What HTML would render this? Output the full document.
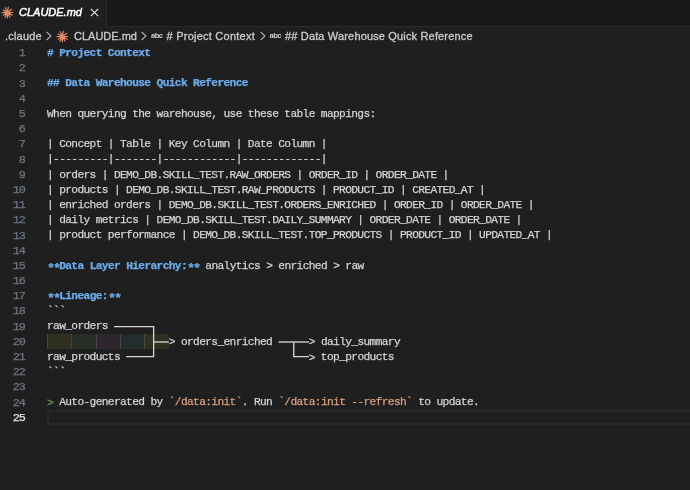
<!DOCTYPE html>
<html><head><meta charset="utf-8">
<style>
html,body{margin:0;padding:0;width:690px;height:490px;overflow:hidden;background:#1f1f1f;}
body{position:relative;font-family:"Liberation Sans",sans-serif;}
#tabs{position:absolute;left:0;top:0;width:690px;height:27px;background:#181818;}
#tabs .fill{position:absolute;left:106px;top:0;width:584px;height:27px;border-left:1px solid #2b2b2b;border-bottom:1px solid #2b2b2b;box-sizing:border-box;}
#tab{position:absolute;left:0;top:0;width:106px;height:27px;background:#1f1f1f;}
#tab .name{position:absolute;left:19px;top:6px;font-size:11px;font-style:italic;color:#ffffff;white-space:pre;will-change:transform;-webkit-text-stroke:0.5px #fff;}
#crumbs{position:absolute;left:0;top:27px;height:19px;width:690px;font-size:11px;color:#cccccc;white-space:pre;will-change:transform;-webkit-text-stroke-width:0.3px;}
#crumbs span{position:absolute;top:3px;}
#crumbs span.abc{font-size:7.6px;font-weight:bold;top:3.9px;color:#d0d0d0;letter-spacing:-0.55px;-webkit-text-stroke-width:0}
.ed{position:absolute;left:0;top:46px;width:690px;font-family:"Liberation Mono",monospace;font-size:11.2px;letter-spacing:-0.628px;line-height:15.18px;white-space:pre;will-change:transform;-webkit-text-stroke-width:0.25px;}
.ln{position:absolute;left:0;width:25px;text-align:right;color:#6e7681;font-size:11.8px;letter-spacing:-0.9px;top:0.3px!important;}
.code{position:absolute;left:47px;top:0.0px!important;color:#d4d4d4;}
.h{color:#6cacec;font-weight:bold;}
.q{color:#6a9955;}
.gt{position:relative;top:0.8px;}
.ast{position:relative;top:3px;font-size:13.5px;letter-spacing:-2.0px;line-height:0;}
.c{color:#d99f81;}
</style></head><body>
<div id="tabs"><div class="fill"></div></div>
<div id="tab">
  <svg style="position:absolute;left:0.5px;top:5.5px" width="13" height="13" viewBox="0 0 13 13"><path d="M7.35 5.81L7.83 0.63L6.84 0.49L5.87 5.60ZM6.84 5.46L4.50 1.03L3.60 1.45L5.48 6.09ZM6.18 5.45L1.90 3.27L1.40 4.13L5.43 6.75ZM5.67 5.78L0.39 6.21L0.42 7.21L5.73 7.28ZM5.41 6.34L1.63 9.30L2.20 10.12L6.27 7.57ZM5.46 6.85L3.29 11.47L4.17 11.94L6.79 7.56ZM5.72 7.27L5.79 12.58L6.79 12.61L7.22 7.33ZM6.21 7.56L8.73 11.77L9.62 11.30L7.54 6.85ZM6.82 7.55L11.36 9.88L11.86 9.02L7.57 6.25ZM7.30 7.25L12.20 7.00L12.20 6.00L7.30 5.75ZM7.59 6.60L11.46 3.26L10.84 2.47L6.67 5.42Z" fill="#e38a64"/><circle cx="6.5" cy="6.5" r="1.9" fill="#e38a64"/></svg>
  <span class="name">CLAUDE.md</span>
  <svg style="position:absolute;left:89.5px;top:7.5px" width="9" height="9" viewBox="0 0 9 9"><path d="M0.8 0.8L8.2 8.2M8.2 0.8L0.8 8.2" stroke="#e8e8e8" stroke-width="1.15"/></svg>
</div>
<div id="crumbs">
  <span style="left:5px;letter-spacing:0.2px">.claude</span>
  <svg style="position:absolute;left:46px;top:4px" width="6" height="10" viewBox="0 0 6 10"><path d="M0.6 0.8L4.9 5L0.6 9.2" fill="none" stroke="#b8b8b8" stroke-width="1.1"/></svg>
  <svg style="position:absolute;left:56px;top:2.5px" width="13" height="13" viewBox="0 0 13 13"><path d="M7.35 5.81L7.83 0.63L6.84 0.49L5.87 5.60ZM6.84 5.46L4.50 1.03L3.60 1.45L5.48 6.09ZM6.18 5.45L1.90 3.27L1.40 4.13L5.43 6.75ZM5.67 5.78L0.39 6.21L0.42 7.21L5.73 7.28ZM5.41 6.34L1.63 9.30L2.20 10.12L6.27 7.57ZM5.46 6.85L3.29 11.47L4.17 11.94L6.79 7.56ZM5.72 7.27L5.79 12.58L6.79 12.61L7.22 7.33ZM6.21 7.56L8.73 11.77L9.62 11.30L7.54 6.85ZM6.82 7.55L11.36 9.88L11.86 9.02L7.57 6.25ZM7.30 7.25L12.20 7.00L12.20 6.00L7.30 5.75ZM7.59 6.60L11.46 3.26L10.84 2.47L6.67 5.42Z" fill="#e38a64"/><circle cx="6.5" cy="6.5" r="1.9" fill="#e38a64"/></svg>
  <span style="left:74px">CLAUDE.md</span>
  <svg style="position:absolute;left:141px;top:4px" width="6" height="10" viewBox="0 0 6 10"><path d="M0.6 0.8L4.9 5L0.6 9.2" fill="none" stroke="#b8b8b8" stroke-width="1.1"/></svg>
  <span class="abc" style="left:151px">abc</span>
  <svg style="position:absolute;left:260px;top:4px" width="6" height="10" viewBox="0 0 6 10"><path d="M0.6 0.8L4.9 5L0.6 9.2" fill="none" stroke="#b8b8b8" stroke-width="1.1"/></svg>
  <span class="abc" style="left:269.5px">abc</span>
  <span style="left:166.5px;letter-spacing:0.24px"># Project Context</span>
  <span style="left:285px;letter-spacing:0.16px">## Data Warehouse Quick Reference</span>
</div>
<div style="position:absolute;left:47.00px;top:334px;width:24.37px;height:15px;background:#2f2f22"></div>
<div style="position:absolute;left:71.37px;top:334px;width:24.37px;height:15px;background:#262e26"></div>
<div style="position:absolute;left:95.74px;top:334px;width:24.37px;height:15px;background:#2e262f"></div>
<div style="position:absolute;left:120.12px;top:334px;width:24.37px;height:15px;background:#232d2d"></div>
<div style="position:absolute;left:144.49px;top:334px;width:24.37px;height:15px;background:#2f2f22"></div>
<div style="position:absolute;left:47.00px;top:334px;width:1px;height:15px;background:rgba(220,200,170,0.16)"></div>
<div style="position:absolute;left:71.37px;top:334px;width:1px;height:15px;background:rgba(220,200,170,0.16)"></div>
<div style="position:absolute;left:95.74px;top:334px;width:1px;height:15px;background:rgba(220,200,170,0.16)"></div>
<div style="position:absolute;left:120.12px;top:334px;width:1px;height:15px;background:rgba(220,200,170,0.16)"></div>
<div style="position:absolute;left:144.49px;top:334px;width:1px;height:15px;background:rgba(220,200,170,0.16)"></div>
<div style="position:absolute;left:47px;top:410px;width:645px;height:15px;border:2px solid #282828;box-sizing:border-box"></div>
<svg style="position:absolute;left:0;top:0" width="690" height="490">
<g stroke="#d4d4d4" stroke-width="1.35" fill="none">
<path d="M114.02 326.6H153.63V356.6H126.21"/>
<path d="M153.63 342H168.86"/>
<path d="M278.53 342H309.00"/>
<path d="M293.77 342V356.6H309.00"/>
</g></svg>
<div class="ed">
<div class="ln" style="top:0">1
2
3
4
5
6
7
8
9
10
11
12
13
14
15
16
17
18
19
20
21
22
23
24
<span style="color:#e2e2e2">25</span></div>
<div class="code" style="top:0"><span class="h"># Project Context</span>

<span class="h">## Data Warehouse Quick Reference</span>

When querying the warehouse, use these table mappings:

| Concept | Table | Key Column | Date Column |
|---------|-------|------------|-------------|
| orders | DEMO_DB.SKILL_TEST.RAW_ORDERS | ORDER_ID | ORDER_DATE |
| products | DEMO_DB.SKILL_TEST.RAW_PRODUCTS | PRODUCT_ID | CREATED_AT |
| enriched orders | DEMO_DB.SKILL_TEST.ORDERS_ENRICHED | ORDER_ID | ORDER_DATE |
| daily metrics | DEMO_DB.SKILL_TEST.DAILY_SUMMARY | ORDER_DATE | ORDER_DATE |
| product performance | DEMO_DB.SKILL_TEST.TOP_PRODUCTS | PRODUCT_ID | UPDATED_AT |

<span class="h"><span class="ast">**</span>Data Layer Hierarchy:<span class="ast">**</span></span> analytics <span class="gt">&gt;</span> enriched <span class="gt">&gt;</span> raw

<span class="h"><span class="ast">**</span>Lineage:<span class="ast">**</span></span>
```
raw_orders
                    <span class="gt">&gt;</span> orders_enriched      <span class="gt">&gt;</span> daily_summary
raw_products                               <span class="gt">&gt;</span> top_products
```

<span class="q gt">&gt;</span> Auto-generated by <span class="c">`/data:init`</span>. Run <span class="c">`/data:init --refresh`</span> to update.
</div>
</div>
</body></html>
